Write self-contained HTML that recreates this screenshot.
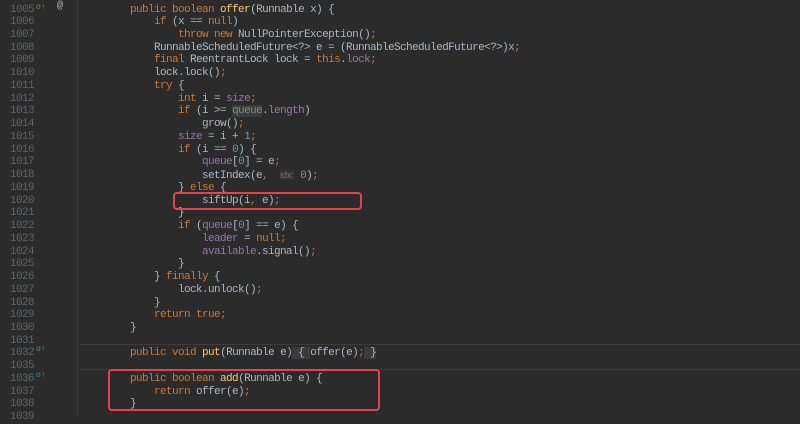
<!DOCTYPE html><html><head><style>
body{margin:0;width:800px;height:415px;background:#2b2b2b;overflow:hidden;position:relative;font-family:"Liberation Mono",monospace;font-size:11px;letter-spacing:-0.6px;}
.ln{position:absolute;left:0;width:34px;text-align:right;color:#606366;}
.r{position:absolute;left:0;height:12.74px;line-height:12.74px;}
.c{position:absolute;left:82px;color:#a9b7c6;white-space:pre;}
.k{color:#cc7832}.p{color:#9876aa}.n{color:#6897bb}.m{color:#ffc66d}.h{color:#787878;font-family:"Liberation Sans",sans-serif;font-size:9px;letter-spacing:0;background:#333;}
.f{background:#3b3b3b}
.box{position:absolute;border:2px solid #e8414e;border-radius:4px;}
.hl{position:absolute;left:80px;right:0;height:1px;background:#3c3c3c}
</style></head><body>
<div style="position:absolute;left:77px;top:0;width:1px;height:415px;background:#3a3a3a"></div>
<div class="hl" style="top:344px"></div><div class="hl" style="top:369px"></div>
<div id="g"></div>
<div class="box" style="left:173px;top:192px;width:185px;height:14px"></div>
<div class="box" style="left:108px;top:369px;width:268px;height:38px"></div>
<div style="position:absolute;left:36px;top:3px;color:#59a869;font-size:8px;letter-spacing:0">o<span style="color:#c75450">↑</span></div>
<div style="position:absolute;left:57px;top:1px;color:#a9b7c6;font-size:10px;letter-spacing:0">@</div>
<div style="position:absolute;left:36px;top:345px;color:#59a869;font-size:8px;letter-spacing:0">o<span style="color:#c75450">↑</span></div>
<div style="position:absolute;left:36px;top:371px;color:#3592c4;font-size:8px;letter-spacing:0">o<span style="color:#c75450">↑</span></div>
<script>
const L=[
[1005,'        <span class="k">public boolean</span> <span class="m">offer</span>(Runnable x) {'],
[1006,'            <span class="k">if</span> (x == <span class="k">null</span>)'],
[1007,'                <span class="k">throw new</span> NullPointerException()<span class="k">;</span>'],
[1008,'            RunnableScheduledFuture&lt;?&gt; e = (RunnableScheduledFuture&lt;?&gt;)x<span class="k">;</span>'],
[1009,'            <span class="k">final</span> ReentrantLock lock = <span class="k">this</span>.<span class="p">lock</span><span class="k">;</span>'],
[1010,'            lock.lock()<span class="k">;</span>'],
[1011,'            <span class="k">try</span> {'],
[1012,'                <span class="k">int</span> i = <span class="p">size</span><span class="k">;</span>'],
[1013,'                <span class="k">if</span> (i &gt;= <span class="p" style="background:#344134">queue</span>.<span class="p">length</span>)'],
[1014,'                    grow()<span class="k">;</span>'],
[1015,'                <span class="p">size</span> = i + <span class="n">1</span><span class="k">;</span>'],
[1016,'                <span class="k">if</span> (i == <span class="n">0</span>) {'],
[1017,'                    <span class="p">queue</span>[<span class="n">0</span>] = e<span class="k">;</span>'],
[1018,'                    setIndex(e<span class="k">,</span>  <span class="h">idx:</span> <span class="n">0</span>)<span class="k">;</span>'],
[1019,'                } <span class="k">else</span> {'],
[1020,'                    siftUp(i<span class="k">,</span> e)<span class="k">;</span>'],
[1021,'                }'],
[1022,'                <span class="k">if</span> (<span class="p">queue</span>[<span class="n">0</span>] == e) {'],
[1023,'                    <span class="p">leader</span> = <span class="k">null;</span>'],
[1024,'                    <span class="p">available</span>.signal()<span class="k">;</span>'],
[1025,'                }'],
[1026,'            } <span class="k">finally</span> {'],
[1027,'                lock.unlock()<span class="k">;</span>'],
[1028,'            }'],
[1029,'            <span class="k">return true;</span>'],
[1030,'        }'],
[1031,''],
[1032,'        <span class="k">public void</span> <span class="m">put</span>(Runnable e)<span class="f"> { </span>offer(e)<span class="k">;</span><span class="f"> }</span>'],
[1035,''],
[1036,'        <span class="k">public boolean</span> <span class="m">add</span>(Runnable e) {'],
[1037,'            <span class="k">return</span> offer(e)<span class="k">;</span>'],
[1038,'        }'],
[1039,'']];
let h='';L.forEach((l,i)=>{const t=(3.5+i*12.74).toFixed(2);h+=`<div class="r" style="top:${t}px"><span class="ln">${l[0]}</span></div><div class="r c" style="top:${t}px">${l[1]}</div>`;});
document.getElementById('g').innerHTML=h;
</script>
</body></html>
